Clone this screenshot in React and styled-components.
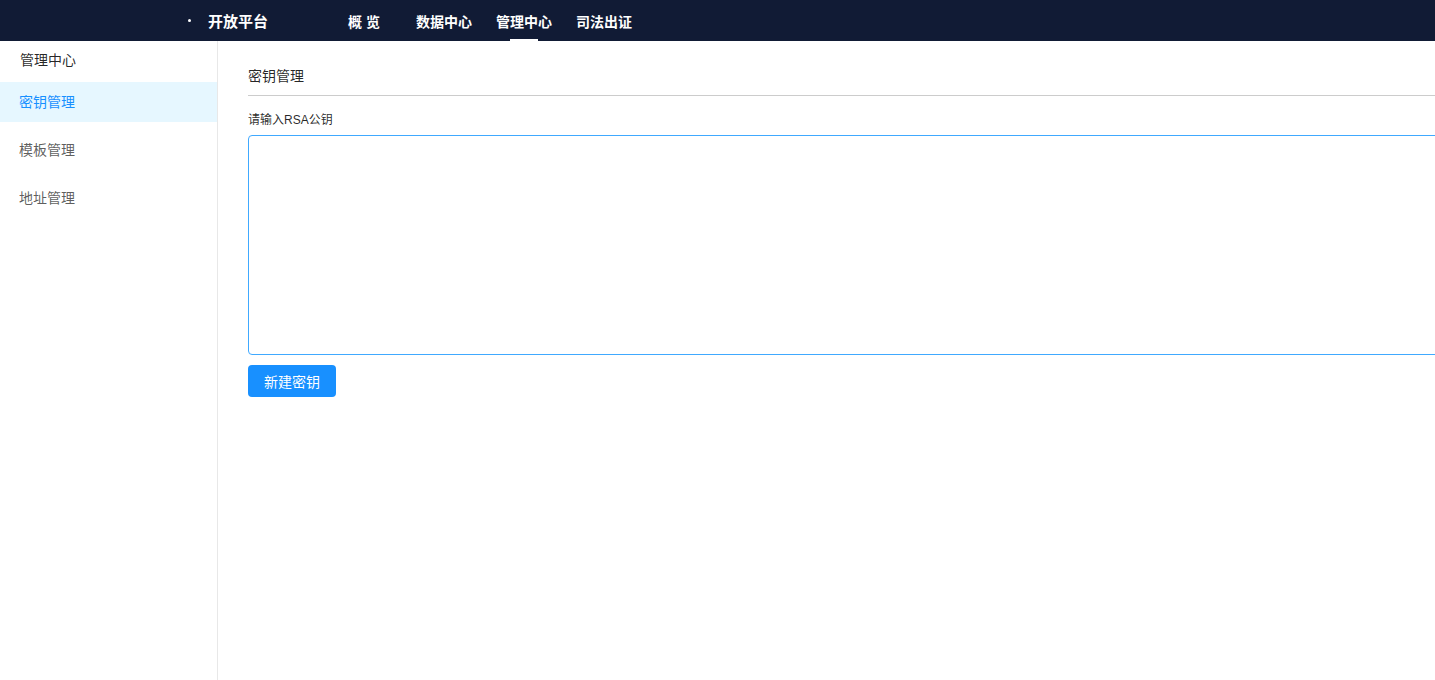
import React from 'react'
import styled, { createGlobalStyle } from 'styled-components'

const GlobalStyle = createGlobalStyle`
  html, body {
    margin: 0;
    padding: 0;
    overflow: hidden;
    background: #fff;
    font-family: 'Liberation Sans', 'Noto Sans CJK SC', sans-serif;
  }
  * { box-sizing: border-box; }
`

const Page = styled.div`
  display: flex;
  flex-direction: column;
  height: 680px;
`

const TopBar = styled.header`
  display: flex;
  align-items: center;
  height: 41px;
  padding-left: 188px;
  background: #111b35;
  color: #fff;
  flex-shrink: 0;
`

const Logo = styled.div`
  display: flex;
  align-items: center;
  width: 160px;
  font-size: 15px;
  font-weight: bold;
`

const LogoDot = styled.span`
  width: 3px;
  height: 3px;
  margin-right: 17px;
  background: #fff;
  border-radius: 50%;
`

const Nav = styled.nav`
  display: flex;
  height: 100%;
`

const NavItem = styled.a`
  position: relative;
  display: flex;
  align-items: center;
  height: 100%;
  margin-right: ${p => p.$gap}px;
  font-size: 14px;
  font-weight: bold;
  color: #fff;
  white-space: pre;

  &::after {
    content: '';
    display: ${p => (p.$active ? 'block' : 'none')};
    position: absolute;
    left: 50%;
    bottom: 0;
    width: 28px;
    height: 2px;
    margin-left: -14px;
    background: #fff;
  }
`

const Body = styled.div`
  display: flex;
  flex: 1;
  min-height: 0;
`

const Sidebar = styled.aside`
  width: 218px;
  flex-shrink: 0;
  border-right: 1px solid #e8e8e8;
`

const SideTitle = styled.div`
  height: 41px;
  padding-left: 20px;
  line-height: 39px;
  font-size: 14px;
  color: rgba(0, 0, 0, 0.85);
`

const MenuItem = styled.div`
  height: 40px;
  margin-bottom: 8px;
  padding-left: 19px;
  line-height: 40px;
  font-size: 14px;
  color: ${p => (p.$active ? '#1890ff' : 'rgba(0, 0, 0, 0.65)')};
  background: ${p => (p.$active ? '#e6f7ff' : 'transparent')};
`

const Main = styled.main`
  flex: 1;
  min-width: 0;
  overflow: hidden;
  padding: 25px 0 0 30px;
`

const Inner = styled.div`
  width: calc(100% + 40px);
`

const Title = styled.div`
  height: 30px;
  font-size: 14px;
  line-height: 20px;
  color: rgba(0, 0, 0, 0.85);
  border-bottom: 1px solid #cccccc;
`

const Label = styled.div`
  margin-top: 14px;
  font-size: 12px;
  line-height: 20px;
  color: rgba(0, 0, 0, 0.85);
`

const KeyInput = styled.textarea`
  display: block;
  width: 100%;
  height: 220px;
  margin-top: 5px;
  border: 1px solid #40a9ff;
  border-radius: 4px;
  outline: none;
  resize: none;
  font-family: inherit;
`

const Button = styled.button`
  margin-top: 10px;
  width: 88px;
  height: 32px;
  border: none;
  border-radius: 4px;
  background: #1890ff;
  color: #fff;
  font-family: inherit;
  font-size: 14px;
  cursor: pointer;
`

const navItems = [
  { label: '概 览', gap: 36 },
  { label: '数据中心', gap: 24 },
  { label: '管理中心', gap: 24, active: true },
  { label: '司法出证', gap: 0 },
]

const menu = [
  { label: '密钥管理', active: true },
  { label: '模板管理' },
  { label: '地址管理' },
]

export default function App() {
  return (
    <Page>
      <GlobalStyle />
      <TopBar>
        <Logo>
          <LogoDot />
          开放平台
        </Logo>
        <Nav>
          {navItems.map(item => (
            <NavItem key={item.label} $gap={item.gap} $active={item.active}>
              {item.label}
            </NavItem>
          ))}
        </Nav>
      </TopBar>
      <Body>
        <Sidebar>
          <SideTitle>管理中心</SideTitle>
          {menu.map(item => (
            <MenuItem key={item.label} $active={item.active}>
              {item.label}
            </MenuItem>
          ))}
        </Sidebar>
        <Main>
          <Inner>
            <Title>密钥管理</Title>
            <Label>请输入RSA公钥</Label>
            <KeyInput />
            <Button>新建密钥</Button>
          </Inner>
        </Main>
      </Body>
    </Page>
  )
}
